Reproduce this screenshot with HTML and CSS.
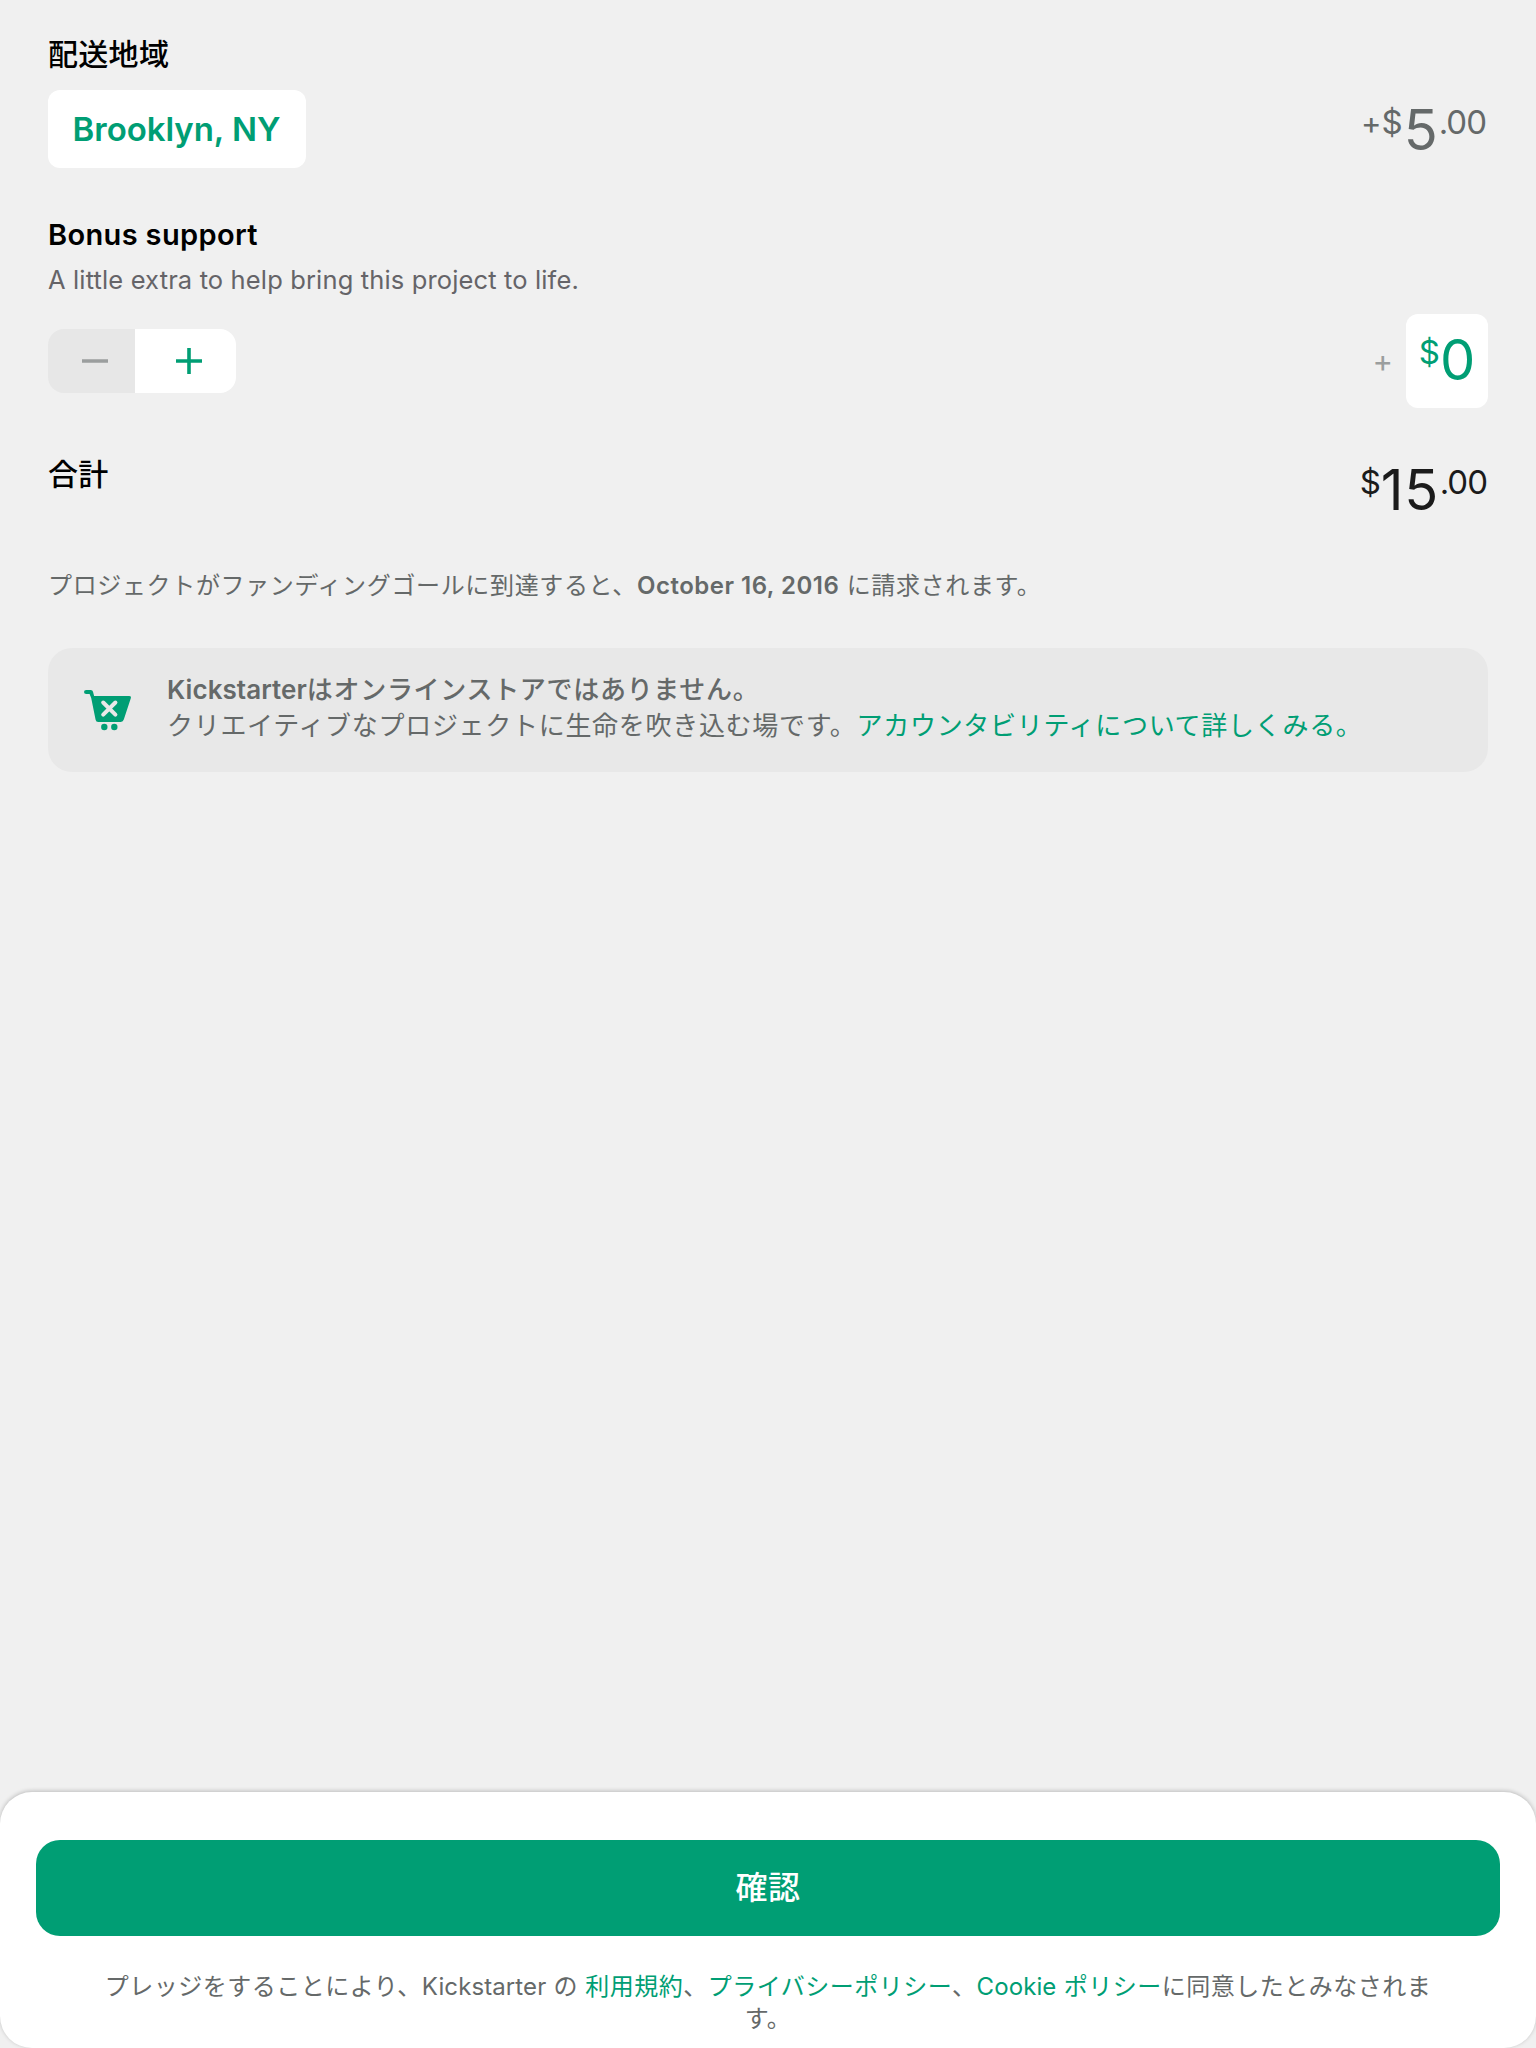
FILE: index.html
```html
<!DOCTYPE html>
<html lang="ja">
<head>
<meta charset="utf-8">
<title>Pledge</title>
<link rel="stylesheet" href="styles.css">
</head>
<body>
<main class="pledge">
  <h2 class="heading heading-jp">配送地域</h2>
  <div class="row shipping">
    <button class="location">Brooklyn, NY</button>
    <div class="price price-muted"><span class="plus">+</span><span class="small symbol">$</span><span class="big">5</span><span class="small cents">.00</span></div>
  </div>
  <h2 class="heading heading-en">Bonus support</h2>
  <p class="subtitle">A little extra to help bring this project to life.</p>
  <div class="row bonus">
    <div class="stepper">
      <button class="step step-minus" aria-label="minus">
        <svg width="26" height="26" viewBox="0 0 26 26"><path d="M0 13H26" /></svg>
      </button>
      <button class="step step-plus" aria-label="plus">
        <svg width="26" height="26" viewBox="0 0 26 26"><path d="M0 13H26M13 0V26" /></svg>
      </button>
    </div>
    <div class="bonus-amount">
      <span class="bonus-plus">+</span>
      <div class="amount-field price"><span class="small symbol">$</span><span class="big">0</span></div>
    </div>
  </div>
  <div class="row total">
    <h2 class="heading heading-jp">合計</h2>
    <div class="price price-total"><span class="small symbol">$</span><span class="big">15</span><span class="small cents">.00</span></div>
  </div>
  <p class="charge-note">プロジェクトがファンディングゴールに到達すると、<b>October 16, 2016</b> に請求されます。</p>
  <section class="notice">
    <svg class="cart" width="48" height="42" viewBox="0 0 48 42">
      <path class="cart-body" d="M2.2 0H6.8Q8.6 0 9 1.8L10.1 6H45.2Q47.5 6 46.8 8.2L39.8 29.6Q39.1 32 36.8 32H14.2Q12 32 11.6 29.8L7.2 8L5.6 4H2.2Q0 4 0 2Q0 0 2.2 0Z" />
      <circle class="cart-body" cx="20.3" cy="37" r="3.2" />
      <circle class="cart-body" cx="30.3" cy="37" r="3.2" />
      <path class="cart-cross" d="M19.2 12.5L31.4 24.7M31.4 12.5L19.2 24.7" />
    </svg>
    <div class="notice-text">
      <p class="notice-title"><span class="brand">Kickstarter</span>はオンラインストアではありません。</p>
      <p>クリエイティブなプロジェクトに生命を吹き込む場です。<a>アカウンタビリティについて詳しくみる。</a></p>
    </div>
  </section>
</main>
<footer class="sheet">
  <button class="confirm">確認</button>
  <p class="terms">プレッジをすることにより、<span class="latin">Kickstarter</span> の <a>利用規約</a>、<a>プライバシーポリシー</a>、<a><span class="latin">Cookie</span> ポリシー</a>に同意したとみなされま<br>す。</p>
</footer>
</body>
</html>
```
FILE: styles.css
```css
* { box-sizing: border-box; }

body {
  margin: 0;
  width: 1536px;
  height: 2048px;
  display: flex;
  flex-direction: column;
  justify-content: space-between;
  background: #f0f0f0;
  color: #656969;
  font-family: Inter, "Noto Sans CJK JP", sans-serif;
  overflow: hidden;
}

h2, p { margin: 0; white-space: nowrap; }
a { color: #009e74; }

button {
  border: 0;
  padding: 0;
  font-family: inherit;
}

.pledge {
  display: flex;
  flex-direction: column;
  padding: 34px 48px 0;
}

.row {
  display: flex;
  justify-content: space-between;
  align-items: flex-start;
}

.heading {
  color: #000;
  font-size: 30px;
  line-height: 40px;
}
.heading-jp { font-weight: 500; letter-spacing: 0.3px; }
.heading-en { font-weight: 600; font-size: 29px; letter-spacing: 0.35px; }

.shipping { height: 78px; margin-top: 16px; }

.location {
  width: 258px;
  height: 78px;
  padding-right: 1px;
  border-radius: 12px;
  background: #fff;
  color: #009e74;
  font-size: 33px;
  font-weight: 600;
  line-height: 78px;
  letter-spacing: -0.05px;
  white-space: nowrap;
}

.price {
  display: flex;
  align-items: flex-start;
  white-space: nowrap;
}
.big { font-size: 56px; line-height: 56px; }
.small { font-size: 33px; line-height: 41px; }
.symbol { margin-right: 1px; }
.cents { letter-spacing: -1px; margin-left: 1px; margin-right: 1px; }
.plus { font-size: 31px; line-height: 41px; }
.price-muted { color: #656969; padding: 12px 1px 0 0; }
.price-total { color: #1b1b1b; padding-top: 8px; }
.price-total .symbol { margin-right: 0; }
.price-total .big { letter-spacing: 0.5px; }

.heading-en { margin-top: 47px; }
.subtitle {
  margin-top: 7px;
  color: #656468;
  font-size: 25.5px;
  line-height: 36px;
  letter-spacing: 0.14px;
}

.bonus { height: 94px; margin-top: 16px; }

.stepper {
  display: flex;
  width: 188px;
  height: 64px;
  margin-top: 15px;
  border-radius: 16px;
  overflow: hidden;
}
.step {
  display: flex;
  align-items: center;
  fill: none;
  stroke-width: 3.6;
}
.step-minus {
  width: 87px;
  padding-left: 34px;
  background: #e7e7e7;
  stroke: #9b9e9e;
}
.step-plus {
  width: 101px;
  padding-left: 41px;
  background: #fff;
  stroke: #009e74;
}

.bonus-amount { display: flex; align-items: flex-start; gap: 13px; }
.bonus-plus {
  color: #9b9e9e;
  font-size: 31px;
  line-height: 94px;
}
.amount-field {
  justify-content: center;
  width: 82px;
  height: 94px;
  padding-top: 18px;
  border-radius: 12px;
  background: #fff;
  color: #009e74;
}
.amount-field .symbol { margin-right: 0; }

.total { height: 60px; margin-top: 46px; }

.charge-note {
  margin-top: 52px;
  font-size: 24px;
  line-height: 40px;
  letter-spacing: 0.65px;
}
.charge-note b { font-weight: 600; letter-spacing: 0.5px; }

.notice {
  display: flex;
  align-items: flex-start;
  height: 124px;
  margin-top: 42px;
  padding: 24px 36px;
  gap: 35px;
  border-radius: 24px;
  background: #e8e8e8;
}
.cart { margin-top: 18px; }
.cart-body { fill: #009e74; }
.cart-cross {
  fill: none;
  stroke: #e8e8e8;
  stroke-width: 4;
  stroke-linecap: round;
}
.notice-text {
  font-size: 26px;
  line-height: 36px;
  letter-spacing: 0.7px;
}
.notice-title { font-weight: 500; }
.brand { font-weight: 600; letter-spacing: 0.05px; }

.sheet {
  display: flex;
  flex-direction: column;
  height: 256px;
  padding: 48px 36px 0;
  border-radius: 32px;
  background: #fff;
  box-shadow: 0 -1px 4px rgba(0, 0, 0, 0.22);
}
.confirm {
  height: 96px;
  border-radius: 24px;
  background: #009e74;
  color: #fff;
  font-size: 32px;
  font-weight: 500;
  line-height: 96px;
  letter-spacing: 0.5px;
}
.terms {
  margin-top: 35px;
  font-size: 24px;
  line-height: 32px;
  letter-spacing: 0.5px;
  text-align: center;
}
.latin { letter-spacing: 0.1px; }
```
